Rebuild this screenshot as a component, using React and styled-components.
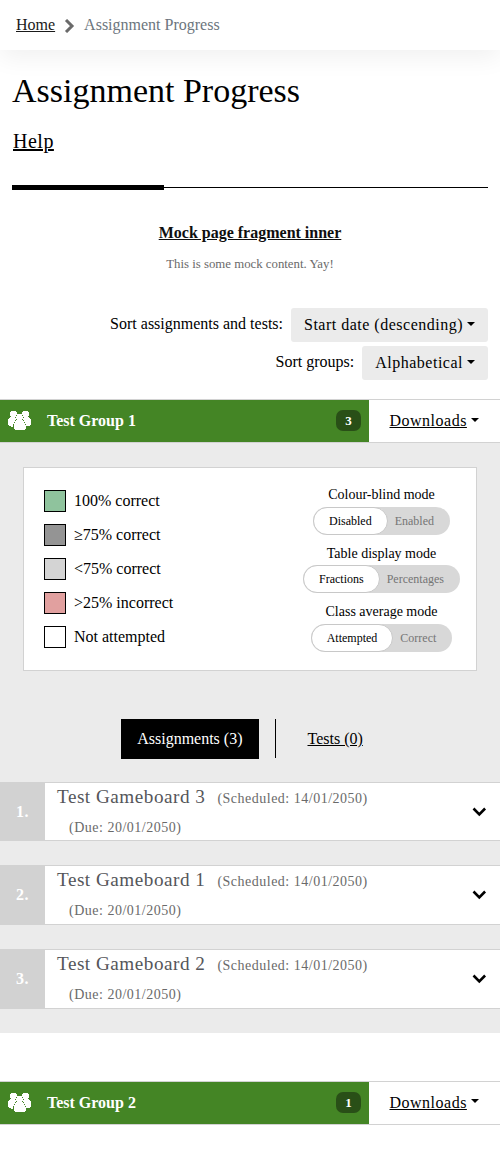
import React from "react";
import styled, { createGlobalStyle } from "styled-components";

const GlobalStyle = createGlobalStyle`
  *, *::before, *::after { box-sizing: border-box; }
  body {
    margin: 0;
    background: #fff;
    color: #000;
    font: 16px/24px "Liberation Serif", serif;
  }
  button { font: inherit; color: inherit; border: 0; background: none; padding: 0; }
  h1, h4, p { margin: 0; font-weight: 400; }
  a { color: inherit; }
`;

const Page = styled.div`
  width: 500px;
  height: 1173px;
  overflow: hidden;
`;

const Breadcrumb = styled.nav`
  display: flex;
  align-items: center;
  height: 50px;
  padding: 0 16px;
  color: #6c757d;
  box-shadow: 0 8px 24px rgba(0, 0, 0, 0.06);
  a { color: #1a1a1a; }
  svg { margin: 2px 9px 0 9px; }
`;

const Container = styled.div`
  padding: 0 12px;
`;

const Title = styled.h1`
  padding-top: 20px;
  font-size: 34px;
  line-height: 42px;
`;

const HelpLink = styled.a`
  display: block;
  width: fit-content;
  margin: 14px 0 0 1px;
  font-size: 20px;
  line-height: 30px;
  letter-spacing: 0.5px;
  text-decoration-thickness: 2px;
`;

const Rule = styled.div`
  display: flex;
  align-items: center;
  height: 5px;
  margin-top: 29px;
  &::before { content: ""; width: 152px; height: 5px; background: #000; }
  &::after { content: ""; flex: 1; height: 1px; background: #000; }
`;

const Fragment = styled.section`
  display: flex;
  flex-direction: column;
  align-items: center;
  padding-top: 31px;
  a { font-weight: 700; color: #0f0f0f; }
  p { margin: 7px 0 1px; color: #6a6a6a; font-size: 12.8px; line-height: 24px; }
`;

const SortList = styled.div`
  display: flex;
  flex-direction: column;
  align-items: flex-end;
  gap: 4px;
  margin-top: 31px;
`;

const SortRow = styled.label`
  display: flex;
  align-items: center;
  gap: 8px;
  span { padding-bottom: 2px; }
`;

const Caret = styled.i`
  width: 8px;
  height: 4px;
  border: 4px solid transparent;
  border-top-color: #000;
  border-bottom: 0;
`;

const SortButton = styled.button`
  display: flex;
  align-items: center;
  gap: 4px;
  height: 34px;
  padding: 0 13px;
  border-radius: 3px;
  background: #ebebeb;
  letter-spacing: 0.5px;
  i { margin-top: -2px; }
`;

const GroupHeader = styled.header`
  display: flex;
  height: 44px;
  margin-top: ${(p) => p.$gap}px;
  border: solid #d2d2d2;
  border-width: 1px 0;
`;

const GroupTitle = styled.div`
  display: flex;
  align-items: center;
  width: 369px;
  padding: 0 8px;
  background: #448525;
  color: #fff;
  font-weight: 700;
  svg { margin: 0 16px 1px 0; }
`;

const Count = styled.span`
  width: 25px;
  height: 21px;
  margin: -1px 0 0 auto;
  border-radius: 7px;
  background: #294f17;
  text-align: center;
  font-size: 13px;
  line-height: 21px;
`;

const Downloads = styled.button`
  display: flex;
  align-items: ${(p) => (p.$raised ? "flex-start" : "center")};
  gap: 4px;
  margin: ${(p) => (p.$raised ? "9px" : "0")} 0 0 20.5px;
  letter-spacing: 0.5px;
  span { text-decoration: underline; }
  i { margin-top: ${(p) => (p.$raised ? "8px" : "-2px")}; }
`;

const GroupBody = styled.section`
  height: 590px;
  padding-top: 24px;
  background: #ebebeb;
`;

const KeyCard = styled.div`
  display: flex;
  justify-content: space-between;
  height: 204px;
  margin: 0 23px;
  padding: 16px 16px 0 20px;
  border: 1px solid #d2d2d2;
  background: #fff;
`;

const KeyList = styled.div`
  display: flex;
  flex-direction: column;
  gap: 10px;
  padding-top: 5px;
`;

const KeyItem = styled.div`
  display: flex;
  align-items: center;
  gap: 8px;
  height: 24px;
  &::before {
    content: "";
    width: 22px;
    height: 22px;
    border: 1px solid #000;
    background: ${(p) => p.$color};
  }
`;

const Modes = styled.div`
  display: flex;
  flex-direction: column;
  align-items: center;
`;

const Mode = styled.div`
  display: flex;
  flex-direction: column;
  align-items: center;
  height: 58.5px;
  font-size: 14px;
  line-height: 21px;
`;

const Switch = styled.div`
  display: flex;
  height: 28px;
  margin-top: 1.9px;
  border-radius: 14px;
  background: #d8d8d8;
  font-size: 12px;
  line-height: 28px;
`;

const Option = styled.span`
  padding: ${(p) => (p.$on ? "0 15px" : "0 16px 0 7px")};
  border: ${(p) => (p.$on ? "1px solid #c8c8c8" : "0")};
  border-radius: 14px;
  background: ${(p) => (p.$on ? "#fff" : "none")};
  color: ${(p) => (p.$on ? "#000" : "#757575")};
  line-height: ${(p) => (p.$on ? "26px" : "28px")};
`;

const Tabs = styled.div`
  display: flex;
  justify-content: center;
  margin-top: 48px;
`;

const Tab = styled.button`
  height: 40px;
  padding: 0 16px;
  background: ${(p) => (p.$active ? "#000" : "none")};
  color: ${(p) => (p.$active ? "#fff" : "#000")};
  text-decoration: ${(p) => (p.$active ? "none" : "underline")};
`;

const Divider = styled.i`
  width: 1px;
  height: 39px;
  margin: 0 16px;
  background: #000;
`;

const Boards = styled.div`
  display: flex;
  flex-direction: column;
  gap: 24px;
  padding-top: 22.8px;
`;

const BoardRow = styled.div`
  display: flex;
  height: 59.6px;
  border: solid #d2d2d2;
  border-width: 1px 0;
  background: #fff;
`;

const BoardNumber = styled.div`
  display: flex;
  align-items: center;
  justify-content: center;
  width: 45px;
  background: #d2d2d2;
  color: #fff;
  font-weight: 700;
  letter-spacing: 0.5px;
`;

const BoardText = styled.h4`
  flex: 1;
  padding-left: 12px;
  color: #55565a;
  font-size: 19.2px;
  line-height: 28.8px;
  letter-spacing: 0.5px;
  small {
    display: inline-block;
    margin-left: 12px;
    color: #6a6a6a;
    font-size: 14px;
    line-height: 21px;
    letter-spacing: 0.5px;
  }
`;

const Toggle = styled.button`
  display: flex;
  align-items: center;
  padding-right: 13px;
`;

const GroupIcon = () => (
  <svg width="23" height="19" viewBox="0 0 23 19" fill="#fff" shapeRendering="crispEdges">
    <path d="M3 0H8V1H9V3H14V1H15V0H20V1H21V5H20V6H21V7H22V8H23V14H22V15H18V18H17V19H7V18H6V15H5V16H3V15H1V14H0V8H1V7H2V6H3V5H2V1H3Z" />
    <path d="M8 4H9V5H8ZM7 6H8V7H7ZM8 8H9V9H8ZM7 9H8V10H7ZM6 11H7V12H6ZM5 13H6V15H5ZM14 4H15V5H14ZM15 6H16V7H15ZM14 8H15V9H14ZM15 9H16V10H15ZM16 11H17V12H16ZM17 13H18V14H17Z" fill="#448525" />
  </svg>
);

const Chevron = () => (
  <svg width="15" height="10" viewBox="0 0 15 10" fill="none" stroke="#000" strokeWidth="2.6">
    <path d="M1.5 1.5L7.3 7.3L13.1 1.5" />
  </svg>
);

const ModeSwitch = ({ label, on, off }) => (
  <Mode>
    {label}
    <Switch><Option $on>{on}</Option><Option>{off}</Option></Switch>
  </Mode>
);

const Group = ({ name, count, gap, raised }) => (
  <GroupHeader $gap={gap}>
    <GroupTitle><GroupIcon />{name}<Count>{count}</Count></GroupTitle>
    <Downloads $raised={raised}><span>Downloads</span><Caret /></Downloads>
  </GroupHeader>
);

const keys = [
  ["100% correct", "#8fc39d"],
  ["≥75% correct", "#949494"],
  ["<75% correct", "#d4d4d4"],
  [">25% incorrect", "#e1a09f"],
  ["Not attempted", "#fff"],
];

export default function App() {
  return (
    <Page>
      <GlobalStyle />
      <Breadcrumb>
        <a href="#home">Home</a>
        <svg width="11" height="14" viewBox="0 0 11 14" fill="none" stroke="#6a6a6a" strokeWidth="3">
          <path d="M2 1L8 7L2 13" />
        </svg>
        Assignment Progress
      </Breadcrumb>
      <Container>
        <Title>Assignment Progress</Title>
        <HelpLink href="#help">Help</HelpLink>
        <Rule />
        <Fragment>
          <a href="#fragment">Mock page fragment inner</a>
          <p>This is some mock content. Yay!</p>
        </Fragment>
        <SortList>
          <SortRow><span>Sort assignments and tests:</span><SortButton>Start date (descending)<Caret /></SortButton></SortRow>
          <SortRow><span>Sort groups:</span><SortButton>Alphabetical<Caret /></SortButton></SortRow>
        </SortList>
      </Container>
      <Group name="Test Group 1" count={3} gap={19} />
      <GroupBody>
        <KeyCard>
          <KeyList>
            {keys.map(([text, color]) => <KeyItem key={text} $color={color}>{text}</KeyItem>)}
          </KeyList>
          <Modes>
            <ModeSwitch label="Colour-blind mode" on="Disabled" off="Enabled" />
            <ModeSwitch label="Table display mode" on="Fractions" off="Percentages" />
            <ModeSwitch label="Class average mode" on="Attempted" off="Correct" />
          </Modes>
        </KeyCard>
        <Tabs>
          <Tab $active>Assignments (3)</Tab>
          <Divider />
          <Tab>Tests (0)</Tab>
        </Tabs>
        <Boards>
          {[3, 1, 2].map((board, i) => (
            <BoardRow key={board}>
              <BoardNumber>{i + 1}.</BoardNumber>
              <BoardText>
                Test Gameboard {board}
                <small>(Scheduled: 14/01/2050)</small>{" "}
                <small>(Due: 20/01/2050)</small>
              </BoardText>
              <Toggle aria-label="Expand"><Chevron /></Toggle>
            </BoardRow>
          ))}
        </Boards>
      </GroupBody>
      <Group name="Test Group 2" count={1} gap={48} raised />
    </Page>
  );
}
